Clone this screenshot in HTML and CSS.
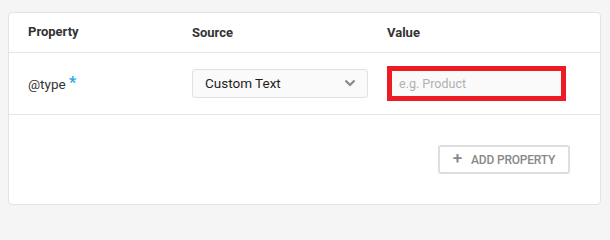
FILE: index.html
```html
<!DOCTYPE html>
<html>
<head>
<meta charset="utf-8">
<link rel="stylesheet" href="styles.css">
</head>
<body>
<div class="card">
  <div class="row head">
    <div class="col c1">Property</div>
    <div class="col c2">Source</div>
    <div class="col c3">Value</div>
  </div>
  <div class="row body">
    <div class="col c1">@type <span class="req">*</span></div>
    <div class="col c2">
      <div class="select">
        <span>Custom Text</span>
        <svg class="chev" width="12" height="8" viewBox="0 0 12 8"><path d="M1.5 1.5 L6 6 L10.5 1.5" fill="none" stroke="#888" stroke-width="2.2"/></svg>
      </div>
    </div>
    <div class="col c3">
      <div class="input"><span class="ph">e.g. Product</span></div>
    </div>
  </div>
  <div class="footer">
    <button class="add"><span class="plus">+</span>ADD PROPERTY</button>
  </div>
</div>
</body>
</html>
```
FILE: styles.css
```css
* { box-sizing: border-box; }
html, body { margin: 0; padding: 0; }
html { background: #f5f5f5; }
body {
  font-family: Roboto, "Liberation Sans", sans-serif;
  width: 610px;
  padding: 12px 0 13px 8px;
}
.card {
  width: 593px;
  height: 193px;
  background: #fff;
  border: 1px solid #e3e3e3;
  border-radius: 4px;
}
.row {
  display: grid;
  grid-template-columns: 164px 195px 1fr;
  align-items: center;
  padding-left: 19px;
  border-bottom: 1px solid #e6e6e6;
}
.head {
  height: 40px;
  font-size: 13px;
  font-weight: 700;
  color: #333;
}
.body {
  height: 62px;
  font-size: 13.5px;
  color: #333;
}
.c1 { padding-bottom: 2px; }
.req { color: #29a9e0; font-size: 16px; font-weight: 700; vertical-align: 1px; }
.select {
  width: 176px;
  height: 29px;
  border: 1px solid #e1e1e1;
  border-radius: 3px;
  background: #fafafa;
  display: flex;
  align-items: center;
  justify-content: space-between;
  padding: 0 11px 0 12px;
  font-size: 13.5px;
  font-weight: 400;
  color: #1e1e1e;
  margin-top: -1px;
}
.chev { display: block; }
.input {
  width: 179px;
  height: 35px;
  border: 5px solid #ed1c24;
  background: #fafafa;
  display: flex;
  align-items: center;
  padding-left: 7px;
}
.ph { color: #b0b0b0; font-size: 12.5px; }
.footer {
  display: flex;
  justify-content: flex-end;
  padding: 30px 30px 0 0;
}
.add {
  width: 132px;
  height: 29px;
  border: 2px solid #dedede;
  border-radius: 3px;
  background: #fff;
  color: #888;
  font-family: Roboto, "Liberation Sans", sans-serif;
  font-size: 12px;
  font-weight: 500;
  display: flex;
  align-items: center;
  justify-content: center;
  padding: 0;
  letter-spacing: -0.2px;
}
.plus { font-size: 17px; font-weight: 500; margin-right: 9px; line-height: 1; margin-top: -2px; }
```
